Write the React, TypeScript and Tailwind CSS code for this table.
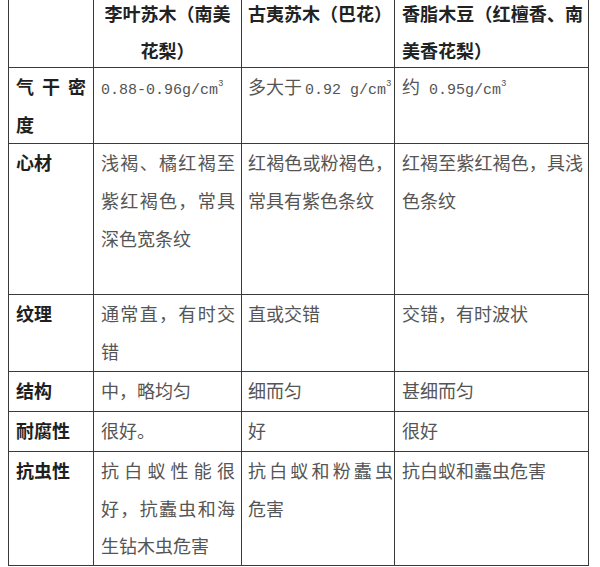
import React from "react"

type Line = React.ReactNode

const cjk = { fontFamily: '"Noto Sans CJK SC", "Noto Sans CJK JP", sans-serif' }

function Num({ children, gap }: { children: React.ReactNode; gap?: boolean }) {
  return (
    <span className={gap ? "ml-[3px] font-['Liberation_Mono',monospace] text-[15px]" : "font-['Liberation_Mono',monospace] text-[15px]"}>
      {children}
    </span>
  )
}

function Cube() {
  return <sup className="text-[9px] -top-[8px] font-['Liberation_Mono',monospace]">3</sup>
}

// every line but the last is stretched to the cell width, like the Word original
function Lines({ lines, center }: { lines: Line[]; center?: boolean }) {
  return (
    <>
      {lines.map((l, i) => {
        const last = i === lines.length - 1
        return (
          <div
            key={i}
            className={
              center
                ? "whitespace-nowrap text-center"
                : last
                  ? "whitespace-nowrap text-left"
                  : "whitespace-nowrap text-justify [text-align-last:justify]"
            }
          >
            {l}
          </div>
        )
      })}
    </>
  )
}

// header row: its top edge is cut off by the window, first line sits flush at y=0
function Head({ lines, center }: { lines: string[]; center?: boolean }) {
  return (
    <div className="pt-[9px]">
      {lines.map((l, i) => {
        const last = i === lines.length - 1
        const align = center
          ? "text-center"
          : last
            ? "text-left"
            : "text-justify [text-align-last:justify]"
        return (
          <div
            key={i}
            className={`whitespace-nowrap ${align} ${i === 0 ? "leading-[24px]" : "mt-[9px] leading-[32px]"}`}
          >
            {l}
          </div>
        )
      })}
    </div>
  )
}

const rows: { h: string; label: Line[]; cells: Line[][] }[] = [
  {
    h: "h-[76px]",
    label: ["气干密", "度"],
    cells: [
      [<><Num>0.88-0.96g/cm</Num><Cube /></>],
      [<>多大于<Num gap>0.92 g/cm</Num><Cube /></>],
      [<>约<Num> 0.95g/cm</Num><Cube /></>],
    ],
  },
  {
    h: "h-[151px]",
    label: ["心材"],
    cells: [
      ["浅褐、橘红褐至", "紫红褐色，常具", "深色宽条纹"],
      ["红褐色或粉褐色，", "常具有紫色条纹"],
      ["红褐至紫红褐色，具浅", "色条纹"],
    ],
  },
  {
    h: "h-[76px]",
    label: ["纹理"],
    cells: [["通常直，有时交", "错"], ["直或交错"], ["交错，有时波状"]],
  },
  {
    h: "h-[40px]",
    label: ["结构"],
    cells: [["中，略均匀"], ["细而匀"], ["甚细而匀"]],
  },
  {
    h: "h-[40px]",
    label: ["耐腐性"],
    cells: [["很好。"], ["好"], ["很好"]],
  },
  {
    h: "h-[114px]",
    label: ["抗虫性"],
    cells: [
      ["抗白蚁性能很", "好，抗蠹虫和海", "生钻木虫危害"],
      ["抗白蚁和粉蠹虫", "危害"],
      ["抗白蚁和蠹虫危害"],
    ],
  },
]

const pad = ["pl-[7px] pr-[6px]", "pl-[6px] pr-[1px]", "pl-[7px] pr-[5px]"]

export default function App() {
  return (
    <div className="h-[567px] w-[600px] overflow-hidden bg-white pl-[8px]" style={cjk}>
      <table className="-mt-[9px] w-[580px] table-fixed border-collapse text-[18px] leading-[37.7px]">
        <colgroup>
          <col className="w-[85px]" />
          <col className="w-[148px]" />
          <col className="w-[153px]" />
          <col className="w-[194px]" />
        </colgroup>
        <tbody>
          <tr>
            <td className="h-[76px] border border-[#3a3a3a] p-0 align-top" />
            <td className="border border-[#3a3a3a] pl-[7px] pr-[7px] align-top font-bold text-[#222]">
              <Head center lines={["李叶苏木（南美", "花梨）"]} />
            </td>
            <td className="border border-[#3a3a3a] pl-[6px] pr-[1px] align-top font-bold text-[#222]">
              <Head lines={["古夷苏木（巴花）"]} />
            </td>
            <td className="border border-[#3a3a3a] pl-[7px] pr-[5px] align-top font-bold text-[#222]">
              <Head lines={["香脂木豆（红檀香、南", "美香花梨）"]} />
            </td>
          </tr>
          {rows.map((r, i) => (
            <tr key={i}>
              <td className={`${r.h} border border-[#3a3a3a] pl-[7px] pr-[7px] align-top font-bold text-[#1f1f1f]`}>
                <Lines lines={r.label} />
              </td>
              {r.cells.map((c, j) => (
                <td key={j} className={`border border-[#3a3a3a] ${pad[j]} align-top text-[#555]`}>
                  <Lines lines={c} />
                </td>
              ))}
            </tr>
          ))}
        </tbody>
      </table>
    </div>
  )
}
